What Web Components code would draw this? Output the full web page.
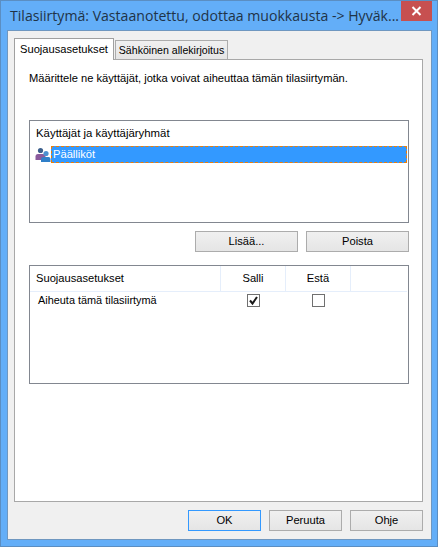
<!DOCTYPE html>
<html lang="fi">
<head>
<meta charset="utf-8">
<title>Tilasiirtymä</title>
<style>
	html, body {
		margin: 0;
		padding: 0;
		background: #63aef8;
	}
</style>
</head>
<body>
<win-dialog heading="Tilasiirtymä: Vastaanotettu, odottaa muokkausta -&gt; Hyväk...">
	<tab-strip>
		<tab-item active>Suojausasetukset</tab-item>
		<tab-item>Sähköinen allekirjoitus</tab-item>
	</tab-strip>
	<tab-panel>
		<p-intro>Määrittele ne käyttäjät, jotka voivat aiheuttaa tämän tilasiirtymän.</p-intro>
		<user-list heading="Käyttäjät ja käyttäjäryhmät">
			<user-row>Päälliköt</user-row>
		</user-list>
		<button-row>
			<dlg-button wide>Lisää...</dlg-button>
			<dlg-button wide>Poista</dlg-button>
		</button-row>
		<perm-table>
			<perm-row label="Aiheuta tämä tilasiirtymä" allow></perm-row>
		</perm-table>
	</tab-panel>
	<button-row slot="footer" class="footer">
		<dlg-button default>OK</dlg-button>
		<dlg-button>Peruuta</dlg-button>
		<dlg-button>Ohje</dlg-button>
	</button-row>
</win-dialog>

<script>
/* global customElements, HTMLElement */
const UI_FONT = '"Liberation Sans", Arial, sans-serif';

function define(name, css, html) {
	customElements.define(name, class extends HTMLElement {
		connectedCallback() {
			if (this.shadowRoot) {
				return;
			}
			const shadow = this.attachShadow({ mode: 'open' });
			shadow.innerHTML = `<style>${css}</style>${typeof html === 'function' ? html(this) : html}`;
		}
	});
}

define('win-dialog', `
	:host {
		display: flex;
		flex-direction: column;
		box-sizing: border-box;
		width: 438px;
		height: 547px;
		padding: 0 5px 6px 6px;
		border: 1px solid #5b8ec2;
		background: #63aef8;
		font: 11.15px/15px ${UI_FONT};
		color: #000;
	}
	.bar {
		display: flex;
		justify-content: space-between;
		align-items: flex-start;
		height: 29px;
		flex: none;
	}
	.title {
		font: 14.1px/20px "Open Sans", "Noto Sans", sans-serif;
		color: #1f3347;
		padding: 5px 0 0 3px;
		white-space: nowrap;
	}
	.close {
		display: flex;
		flex: none;
		align-items: center;
		justify-content: center;
		width: 31px;
		height: 20px;
		background: #c75050;
	}
	.client {
		flex: 1;
		display: flex;
		flex-direction: column;
		border: 1px solid #6f97c0;
		background: #f0f0f0;
		padding: 7px 8px 8px 6px;
	}
	.body {
		flex: 1;
		display: flex;
		flex-direction: column;
	}
`, (el) => `
	<div class="bar">
		<div class="title">${el.getAttribute('heading').replace('>', '&gt;')}</div>
		<div class="close">
			<svg width="11" height="10" viewBox="0 0 11 10"><path d="M1.5 1 L9.5 9 M9.5 1 L1.5 9" stroke="#fff" stroke-width="2" fill="none"/></svg>
		</div>
	</div>
	<div class="client">
		<div class="body"><slot></slot></div>
		<slot name="footer"></slot>
	</div>
`);

define('tab-strip', `
	:host {
		display: flex;
		align-items: flex-end;
		flex: none;
		position: relative;
		z-index: 1;
		margin-bottom: -1px;
		height: 22px;
	}
`, '<slot></slot>');

define('tab-item', `
	:host {
		display: block;
		box-sizing: border-box;
		width: 113px;
		height: 19px;
		margin-bottom: 1px;
		padding-top: 2px;
		text-align: center;
		font-size: 10.6px;
		border: 1px solid #acacac;
		border-bottom: 0;
		background: linear-gradient(#f0f0f0, #e5e5e5);
		white-space: nowrap;
	}
	:host([active]) {
		width: 100px;
		height: 22px;
		margin-bottom: 0;
		margin-right: 1px;
		padding-top: 3px;
		font-size: 11.15px;
		background: #fff;
		border-color: #a0a0a0;
	}
`, '<slot></slot>');

define('tab-panel', `
	:host {
		display: flex;
		flex-direction: column;
		flex: 1;
		box-sizing: border-box;
		border: 1px solid #a8a8a8;
		background: #fff;
		padding: 11px 13px 0 14px;
	}
`, '<slot></slot>');

define('p-intro', `
	:host {
		display: block;
		height: 49px;
		white-space: nowrap;
	}
`, '<slot></slot>');

define('user-list', `
	:host {
		display: block;
		box-sizing: border-box;
		height: 103px;
		border: 1px solid #828790;
		padding: 5px 1px 0 5px;
		background: #fff;
	}
	.head {
		height: 15px;
		padding-left: 1px;
		margin-bottom: 5px;
		font-size: 11.4px;
		white-space: nowrap;
	}
`, (el) => `<div class="head">${el.getAttribute('heading')}</div><slot></slot>`);

define('user-row', `
	:host {
		display: flex;
		align-items: flex-start;
		height: 17px;
	}
	svg {
		flex: none;
		margin-top: 1px;
	}
	.label {
		flex: 1;
		box-sizing: border-box;
		height: 17px;
		padding-left: 1px;
		line-height: 15px;
		color: #fff;
		background: #3399ff;
		border: 1px dashed #ee7d05;
	}
`, `
	<svg width="16" height="16" viewBox="0 0 16 16">
		<circle cx="5.5" cy="3.5" r="2.6" fill="#3c5f8c"/>
		<path d="M0.5 13 V9.5 Q0.5 7 3 7 H8 Q10.5 7 10.5 9.5 V13 Z" fill="#8a5a9c"/>
		<circle cx="11" cy="6.5" r="2.6" fill="#4a90d0"/>
		<path d="M6 15 V12 Q6 10 8.5 10 H13.5 Q15.5 10 15.5 12 V15 Z" fill="#2f7fc8"/>
	</svg>
	<div class="label"><slot></slot></div>
`);

define('button-row', `
	:host {
		display: flex;
		justify-content: flex-end;
		gap: 8px;
		flex: none;
		margin: 8px 0 13px;
	}
	:host(.footer) {
		margin: 8px 0 0;
		height: 21px;
	}
`, '<slot></slot>');

define('dlg-button', `
	:host {
		display: flex;
		align-items: center;
		justify-content: center;
		box-sizing: border-box;
		width: 73px;
		height: 21px;
		border: 1px solid #acacac;
		background: linear-gradient(#f0f0f0, #e5e5e5);
		white-space: nowrap;
	}
	:host([wide]) {
		width: 103px;
	}
	:host([default]) {
		border-color: #3399ff;
	}
`, '<slot></slot>');

define('perm-table', `
	:host {
		display: block;
		box-sizing: border-box;
		height: 119px;
		border: 1px solid #828790;
		background: #fff;
	}
	.head {
		display: grid;
		grid-template-columns: 191px 65px 65px 1fr;
		height: 25px;
		margin-right: 1px;
		border-bottom: 1px solid #e5eefb;
		line-height: 25px;
	}
	.head div {
		border-right: 1px solid #e5eefb;
		text-align: center;
	}
	.head div:first-child {
		text-align: left;
		padding-left: 6px;
	}
	.head div:last-child {
		border-right: 0;
	}
`, `
	<div class="head">
		<div>Suojausasetukset</div>
		<div>Salli</div>
		<div>Estä</div>
		<div></div>
	</div>
	<slot></slot>
`);

define('perm-row', `
	:host {
		display: grid;
		grid-template-columns: 191px 65px 65px 1fr;
		align-items: center;
		height: 16px;
	}
	.name {
		padding-left: 8px;
		font-size: 10.9px;
		white-space: nowrap;
	}
	.cell {
		display: flex;
		justify-content: center;
	}
	.box {
		display: block;
		box-sizing: border-box;
		width: 13px;
		height: 13px;
		border: 1px solid #707070;
		background: #fff;
	}
`, (el) => `
	<div class="name">${el.getAttribute('label')}</div>
	<div class="cell"><span class="box">${el.hasAttribute('allow') ? '<svg width="11" height="11" viewBox="0 0 11 11" style="display:block"><path d="M2 5.5 L4.5 8.5 L9 2" stroke="#1a1a1a" stroke-width="2" fill="none"/></svg>' : ''}</span></div>
	<div class="cell"><span class="box"></span></div>
	<div></div>
`);
</script>
</body>
</html>
